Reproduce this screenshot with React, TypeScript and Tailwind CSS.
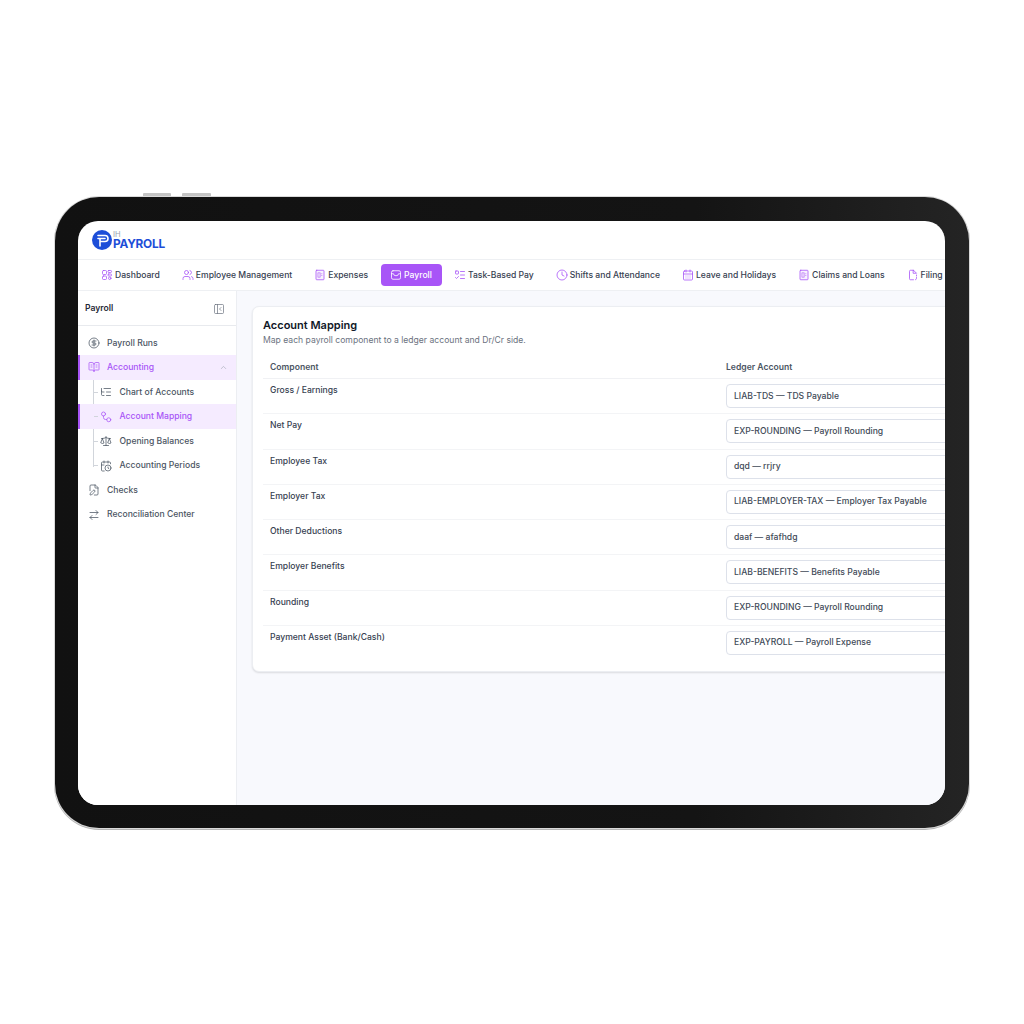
// Tablet mockup with the payroll "Account Mapping" screen inside.
import {
  Users, ListTodo, Clock, CalendarDays,
  PanelLeftClose, CircleDollarSign, BookOpenText, ChevronUp, ListTree, Scale,
  CalendarClock, FilePen, ArrowRightLeft,
} from "lucide-react"

type IconProps = { size?: number; strokeWidth?: number; className?: string }

// Small custom icons where lucide has no close match
function Svg({ size = 12, strokeWidth = 1.5, className, children }: IconProps & { children: React.ReactNode }) {
  return (
    <svg width={size} height={size} viewBox="0 0 24 24" fill="none" stroke="currentColor" strokeWidth={strokeWidth} strokeLinecap="round" strokeLinejoin="round" className={className}>
      {children}
    </svg>
  )
}

function DashIcon(p: IconProps) {
  return (
    <Svg {...p}>
      <rect x="3" y="3" width="8" height="8" rx="2" />
      <rect x="14" y="3" width="7" height="4" rx="1.5" />
      <rect x="14" y="10" width="7" height="4" rx="1.5" />
      <rect x="3" y="14" width="8" height="7" rx="2" />
      <circle cx="17.5" cy="18.5" r="2.5" />
    </Svg>
  )
}

function DocIcon(p: IconProps) {
  return (
    <Svg {...p}>
      <rect x="4" y="2.5" width="16" height="19" rx="1.5" fill="currentColor" fillOpacity="0.08" />
      <rect x="8.5" y="7.5" width="4" height="9" strokeWidth="1" fill="currentColor" fillOpacity="0.15" />
      <path d="M15 9.5h1M15 13h1" strokeWidth="1" />
    </Svg>
  )
}

function PayIcon(p: IconProps) {
  return (
    <Svg {...p}>
      <rect x="3" y="3.5" width="18" height="17" rx="3" />
      <path d="M3 9.5h4a5 4 0 0 0 10 0h4" />
    </Svg>
  )
}

function FilingIcon(p: IconProps) {
  return (
    <Svg {...p}>
      <path d="M13 2.5H7a2 2 0 0 0-2 2v15a2 2 0 0 0 2 2h6" />
      <path d="M13 2.5 19 8.5h-6z" />
      <path d="M19 12v2M19 17v1.5a3 3 0 0 1-2 3" />
    </Svg>
  )
}

function MapIcon(p: IconProps) {
  return (
    <Svg {...p}>
      <circle cx="7" cy="6" r="4" />
      <circle cx="17.5" cy="17.5" r="4" />
      <path d="M7 10v3a4 4 0 0 0 4 4h2.5" />
    </Svg>
  )
}

const TABS = [
  { label: "Dashboard", icon: DashIcon },
  { label: "Employee Management", icon: Users },
  { label: "Expenses", icon: DocIcon },
  { label: "Payroll", icon: PayIcon, active: true },
  { label: "Task-Based Pay", icon: ListTodo },
  { label: "Shifts and Attendance", icon: Clock },
  { label: "Leave and Holidays", icon: CalendarDays },
  { label: "Claims and Loans", icon: DocIcon },
  { label: "Filing", icon: FilingIcon },
]

const SUB_ITEMS = [
  { label: "Chart of Accounts", icon: ListTree },
  { label: "Account Mapping", icon: MapIcon, active: true },
  { label: "Opening Balances", icon: Scale },
  { label: "Accounting Periods", icon: CalendarClock },
]

const ROWS = [
  { name: "Gross / Earnings", account: "LIAB-TDS — TDS Payable" },
  { name: "Net Pay", account: "EXP-ROUNDING — Payroll Rounding" },
  { name: "Employee Tax", account: "dqd — rrjry" },
  { name: "Employer Tax", account: "LIAB-EMPLOYER-TAX — Employer Tax Payable" },
  { name: "Other Deductions", account: "daaf — afafhdg" },
  { name: "Employer Benefits", account: "LIAB-BENEFITS — Benefits Payable" },
  { name: "Rounding", account: "EXP-ROUNDING — Payroll Rounding" },
  { name: "Payment Asset (Bank/Cash)", account: "EXP-PAYROLL — Payroll Expense" },
]

function Logo() {
  return (
    <div className="flex items-center gap-[1px]">
      <svg width="20" height="20" viewBox="0 0 20 20">
        <circle cx="10" cy="10" r="10" fill="#1d4ed8" />
        <path d="M6 5.5h7a3 3 0 0 1 0 6H8M6 8.5h7M8 8.5V16" fill="none" stroke="#fff" strokeWidth="1.6" strokeLinecap="round" />
      </svg>
      <div className="flex flex-col">
        <span className="text-[7.5px] leading-[8px] text-gray-400">IH</span>
        <span className="text-[11.8px] leading-[11px] font-bold text-[#1d4ed8] tracking-[-0.2px]">PAYROLL</span>
      </div>
    </div>
  )
}

function TopNav() {
  return (
    <div className="h-[32px] flex items-center gap-[3px] pl-[14px] border-y border-[#eef0f3] overflow-hidden shrink-0">
      {TABS.map((t) => (
        <div
          key={t.label}
          className={`h-[22px] pl-[9px] pr-[10px] flex items-center gap-[2px] rounded-[4px] shrink-0 whitespace-nowrap text-[8.6px] font-medium ${
            t.active ? "bg-[#a855f7] text-white" : "text-[#374151]"
          }`}
        >
          <t.icon size={12} strokeWidth={1.6} className={t.active ? "text-white" : "text-[#a855f7]"} />
          {t.label}
        </div>
      ))}
    </div>
  )
}

function Sidebar() {
  return (
    <div className="w-[159px] shrink-0 bg-white border-r border-[#eceef2] text-[8.6px] font-medium text-[#4b5563]">
      <div className="h-[35px] pt-[1px] px-[7px] flex items-center justify-between border-b border-[#e8eaee]">
        <span className="text-[#1f2937] font-semibold">Payroll</span>
        <PanelLeftClose size={12} strokeWidth={1.4} className="text-[#6b7280] mr-[4px]" />
      </div>
      <div className="pt-[4.5px]">
        <div className="h-[24.5px] pt-[1px] pl-[10px] flex items-center gap-[7px]">
          <CircleDollarSign size={12} strokeWidth={1.5} />
          Payroll Runs
        </div>
        <div className="h-[24.5px] pl-[8px] pr-[8px] flex items-center gap-[7px] bg-[#f5ebff] border-l-2 border-[#a855f7] text-[#a855f7]">
          <BookOpenText size={12} strokeWidth={1.5} />
          <span className="flex-1">Accounting</span>
          <ChevronUp size={9} strokeWidth={1.5} className="text-[#9ca3af]" />
        </div>
        <div className="relative">
          {/* tree line over the sub items */}
          <div className="absolute left-[15px] top-0 h-[87px] w-px bg-[#d1d5db]" />
          {SUB_ITEMS.map((s) => (
            <div
              key={s.label}
              className={`relative h-[24.5px] pt-[1px] flex items-center gap-[7.5px] pl-[20px] border-l-2 ${
                s.active ? "bg-[#f5ebff] border-[#a855f7] text-[#a855f7]" : "border-transparent"
              }`}
            >
              <div className="absolute left-[14px] top-[12px] w-[4px] h-px bg-[#d1d5db]" />
              <s.icon size={12} strokeWidth={1.5} />
              {s.label}
            </div>
          ))}
        </div>
        <div className="h-[24.5px] pt-[1px] pl-[10px] flex items-center gap-[7px]">
          <FilePen size={12} strokeWidth={1.5} />
          Checks
        </div>
        <div className="h-[24.5px] pt-[1px] pl-[10px] flex items-center gap-[7px]">
          <ArrowRightLeft size={12} strokeWidth={1.5} />
          Reconciliation Center
        </div>
      </div>
    </div>
  )
}

function MappingCard() {
  return (
    <div className="w-[800px] h-[366px] shrink-0 bg-white rounded-[7px] border border-[#eceef2] shadow-[0_1px_2px_rgba(0,0,0,0.12)] pt-[11px] px-[10px]">
      <h2 className="text-[11px] leading-[14px] font-semibold text-[#111827]">Account Mapping</h2>
      <p className="text-[8.6px] leading-[12px] text-[#6b7280] mt-[2px]">
        Map each payroll component to a ledger account and Dr/Cr side.
      </p>
      <div className="h-[33px] pt-[15px] flex text-[8.6px] leading-[12px] font-semibold text-[#4b5563] border-b border-[#f0f1f4]">
        <div className="w-[463px] pl-[7px]">Component</div>
        <div>Ledger Account</div>
      </div>
      {ROWS.map((r) => (
        <div key={r.name} className="h-[35.25px] flex border-b border-[#f3f4f6] last:border-b-0">
          <div className="w-[463px] pl-[7px] pt-[5px] text-[8.6px] leading-[12px] font-medium text-[#374151]">{r.name}</div>
          <div className="flex-1 mt-[5px] h-[24px] flex items-center pl-[7px] rounded-[4px] border border-[#dde1ea] text-[8.6px] font-medium text-[#414a57]">
            {r.account}
          </div>
        </div>
      ))}
    </div>
  )
}

export default function App() {
  return (
    <div className="w-[1024px] h-[1024px] bg-white pt-[197px] pl-[55px] font-['Inter',sans-serif] overflow-hidden">
      <div className="relative w-[914px] h-[631px] rounded-[44px] bg-gradient-to-r from-[#111111] via-[#141414] via-70% to-[#242424] p-[23px] pr-[24px] pt-[24px] shadow-[0_0_0_1px_#dadada,0_1px_0_1px_#b5b5b5]">
        {/* hardware buttons on the top edge */}
        <div className="absolute left-[88px] top-[-4px] w-[28px] h-[3px] bg-[#c4c4c4] rounded-t-[1px]" />
        <div className="absolute left-[127px] top-[-4px] w-[29px] h-[3px] bg-[#c4c4c4] rounded-t-[1px]" />
        <div className="w-[867px] h-[584px] rounded-[20px] bg-white overflow-hidden flex flex-col">
          <div className="h-[38px] shrink-0 flex items-center pl-[14px]">
            <Logo />
          </div>
          <TopNav />
          <div className="flex-1 flex min-h-0">
            <Sidebar />
            <div className="flex-1 bg-[#f8f9fd] pl-[15px] pt-[15px] overflow-hidden">
              <MappingCard />
            </div>
          </div>
        </div>
      </div>
    </div>
  )
}
